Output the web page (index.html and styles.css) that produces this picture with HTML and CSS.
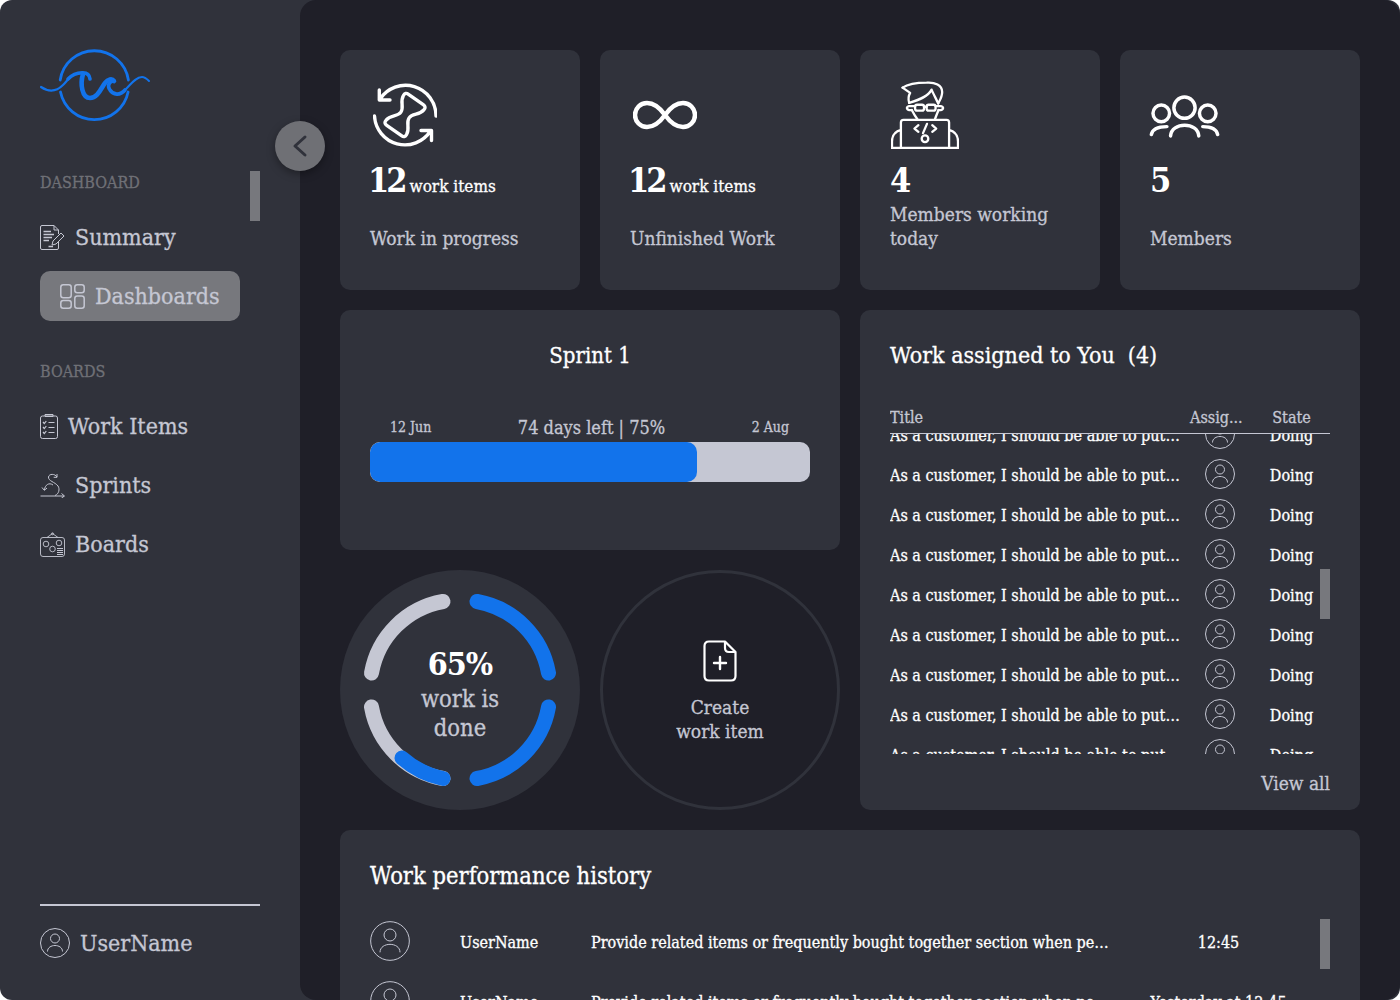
FILE: index.html
```html
<!DOCTYPE html>
<html lang="en">
<head>
  <meta charset="UTF-8" />
  <title>Dashboard</title>
  <link rel="stylesheet" href="styles.css">
</head>
<body>
<div class="app">

  <aside class="sidebar">
    <svg class="logo" viewBox="40 49 112 72" fill="none" stroke="#1273eb" stroke-linecap="round">
      <path d="M60.200 80A34.500 34.500 0 0 1 128.400 80" stroke-width="2.800"/>
      <path d="M60.500 92A34.500 34.500 0 0 0 128.100 92" stroke-width="2.800"/>
      <path d="M41 87C50 93 57 91 63 85C66 82 68 79 70 77.500" stroke-width="2.200"/>
      <path d="M68 79C72 75 77 73 82 72.800C87 72.500 89.500 75 90 79" stroke-width="3.600"/>
      <path d="M83 74C80 84 82 98 90 98C98 98 101 88 105 83C108 79 112 78 114 81" stroke-width="4.600"/>
      <path d="M113 81C109 82 107 86 110 90C113 95 120 96 125 90" stroke-width="3.600"/>
      <path d="M125 90C131 84 136 77 142 77C145 77 147 79 149 81" stroke-width="2"/>
    </svg>

    <div class="side-scroll"></div>
    <div class="nav-label first">DASHBOARD</div>
    <a class="nav-item">
      <svg class="nav-icon" viewBox="0 0 25 25" fill="none" stroke="#c5c7d3" stroke-width="1">
        <path d="M14 .5H2Q.5.5.5 2V23Q.5 24.500 2 24.500H17Q18.500 24.500 18.500 23V17M14 .5L18.500 5V9M14 .5V5H18.500"/>
        <path d="M3.500 6.500H11M3.500 9.500H14M3.500 12.500H12M3.500 15.500H9M8.500 21.500H13" stroke-width="1.300"/>
        <path d="M12 20L13 16L21 8L24 11L16 19Z"/>
      </svg>
      Summary
    </a>
    <a class="nav-item active">
      <svg class="nav-icon" viewBox="0 0 25 25" fill="none" stroke="#c5c7d3" stroke-width="1.500">
        <rect x=".8" y=".8" width="10.400" height="13" rx="2.500"/>
        <rect x="14.800" y=".8" width="9.400" height="8" rx="2.500"/>
        <rect x=".8" y="16.500" width="10.400" height="7.700" rx="2.500"/>
        <rect x="14.800" y="12" width="9.400" height="12.200" rx="2.500"/>
      </svg>
      Dashboards
    </a>

    <div class="nav-label">BOARDS</div>
    <a class="nav-item">
      <svg class="nav-icon clip" viewBox="0 0 18 25" fill="none" stroke="#c5c7d3" stroke-width="1">
        <rect x=".5" y="2" width="17" height="22.500" rx="2"/>
        <path d="M5 2V.5H13V2.500H5"/>
        <path d="M3 8L4.300 9.500L6.300 7M3 13L4.300 14.500L6.300 12M3 18L4.300 19.500L6.300 17" stroke-width="1.200"/>
        <path d="M8.500 8.500H14.500M8.500 13.500H14.500M8.500 18.500H14.500"/>
      </svg>
      Work Items
    </a>
    <a class="nav-item">
      <svg class="nav-icon" viewBox="0 0 25 25" fill="none" stroke="#c5c7d3" stroke-width="1">
        <path d="M.5 23H24M21.500 20.500L24.500 23L21.500 25"/>
        <path d="M17 4C15 .5 9 .5 8.500 4C8 8 15 9 18 13C20 16 19 21 15 22.500"/>
        <path d="M17 1V4.300H13.700"/>
        <path d="M13 12C9 9 5 12 4.300 17M2 14.500L4.300 17.300L7 15"/>
      </svg>
      Sprints
    </a>
    <a class="nav-item">
      <svg class="nav-icon" viewBox="0 0 25 25" fill="none" stroke="#c5c7d3" stroke-width=".9">
        <rect x=".5" y="5.500" width="24" height="19" rx="2.500"/>
        <path d="M7 5.500L12.500 1.500L18 5.500"/>
        <circle cx="12.500" cy="1.800" r="1"/>
        <circle cx="6" cy="12" r="2.800"/>
        <circle cx="19" cy="11" r="2.800"/>
        <circle cx="12.500" cy="17" r="2.800"/>
        <path d="M17 16.500H23M17 18.500H23M17 20.500H23M17 22.500H23" stroke-width="1.100"/>
      </svg>
      Boards
    </a>

    <div class="side-user">
      <svg class="avatar a30" viewBox="0 0 30 30" fill="none" stroke="#c5c7d3" stroke-width="1"><use href="#user"/></svg>
      UserName
    </div>

    <button class="collapse">
      <svg viewBox="0 0 50 50" fill="none" stroke="#30323b" stroke-width="3" stroke-linecap="round" stroke-linejoin="round"><path d="M30 16L20 25L30 34"/></svg>
    </button>
  </aside>

  <main class="main">
    <section class="stats">
      <div class="card stat">
        <svg class="stat-icon" viewBox="0 0 64 64" fill="none" stroke="#fff" stroke-width="3.400" stroke-linecap="round" stroke-linejoin="round">
          <path d="M6.300 7V17H17M7 16A30.500 30.500 0 0 1 63 33"/>
          <path d="M1.500 33A30.500 30.500 0 0 0 57.500 48M48 47.500H58.500V57.500"/>
          <path transform="translate(32 32) rotate(35)" d="M-9 -19H9Q13 -19 12.500 -15C12 -8 5 -6 5 0C5 6 12 8 12.500 15Q13 19 9 19H-9Q-13 19 -12.500 15C-12 8 -5 6 -5 0C-5 -6 -12 -8 -12.500 -15Q-13 -19 -9 -19Z"/>
        </svg>
        <div class="stat-num">12<small>work items</small></div>
        <div class="stat-label">Work in progress</div>
      </div>
      <div class="card stat">
        <svg class="stat-icon" viewBox="0 0 64 64" fill="none" stroke="#fff" stroke-width="4.500">
          <path d="M32 32C27 25 21 20 14 20A12 12 0 0 0 14 44C21 44 27 39 32 32C37 25 43 20 50 20A12 12 0 0 1 50 44C43 44 37 39 32 32Z"/>
        </svg>
        <div class="stat-num">12<small>work items</small></div>
        <div class="stat-label">Unfinished Work</div>
      </div>
      <div class="card stat">
        <svg class="stat-icon wide" viewBox="92 92 206 206" fill="none" stroke="#fff" stroke-width="7" stroke-linejoin="round" stroke-linecap="round">
          <path d="M127 112C145 100 170 97 200 97C225 95 247 105 247 125C247 140 240 150 235 160"/>
          <path d="M127 112L150 128C146 135 143 145 147 158"/>
          <path d="M147 158C175 150 205 140 215 118C220 130 228 145 235 160"/>
          <rect x="165" y="164" width="27" height="18" rx="6"/>
          <rect x="200" y="164" width="27" height="18" rx="6"/>
          <path d="M192 170H200M165 168H147C138 170 138 178 147 180H155M227 168H243C252 170 252 178 243 180H236"/>
          <path d="M155 180C160 190 166 200 172 208M236 180C232 190 228 200 225 208"/>
          <path d="M122 295V218Q122 210 130 210H260Q268 210 268 218V295M122 240C104 245 95 258 95 275V295H295V275C295 258 286 245 268 240"/>
          <path d="M175 226L163 236L175 246M217 226L229 236L217 246M201 222L189 250"/>
          <circle cx="195" cy="267" r="10"/>
        </svg>
        <div class="stat-num solo">4</div>
        <div class="stat-label two-line">Members working today</div>
      </div>
      <div class="card stat">
        <svg class="stat-icon members" viewBox="865 105 220 186" fill="none" stroke="#fff" stroke-width="10.500" stroke-linecap="round">
          <circle cx="905" cy="190" r="25"/>
          <circle cx="975" cy="173" r="32"/>
          <circle cx="1045" cy="190" r="25"/>
          <path d="M875 254C878 238 895 230 922 230M933 258C936 215 1015 215 1018 258M1030 230C1055 230 1072 238 1075 254"/>
        </svg>
        <div class="stat-num solo">5</div>
        <div class="stat-label">Members</div>
      </div>
    </section>

    <section class="middle">
      <div class="mid-left">
        <div class="card sprint">
          <h2 class="sprint-title">Sprint 1</h2>
          <div class="sprint-meta">
            <span>12 Jun</span>
            <strong>74 days left | 75%</strong>
            <span>2 Aug</span>
          </div>
          <div class="bar"><div class="bar-fill" style="width:74.3%"></div></div>
        </div>
        <div class="circles">
          <div class="donut">
            <svg viewBox="0 0 240 240" fill="none" stroke-width="15" stroke-linecap="round">
              <path stroke="#c5c7d3" d="M31.500 103A88.500 88.500 0 0 1 103 31.500"/>
              <path stroke="#c5c7d3" d="M31.500 137A88.500 88.500 0 0 0 103 208.500"/>
              <path stroke="#1273eb" d="M137 31.500A88.500 88.500 0 0 1 208.500 103"/>
              <path stroke="#1273eb" d="M208.500 137A88.500 88.500 0 0 1 137 208.500"/>
              <path stroke="#1273eb" d="M62 188A88.500 88.500 0 0 0 103 208.500"/>
            </svg>
            <div class="donut-text">
              <div class="donut-num">65%</div>
              <div class="donut-label">work is<br>done</div>
            </div>
          </div>
          <div class="create">
            <svg class="create-icon" viewBox="0 0 34 42" fill="none" stroke="#fff" stroke-width="2.200" stroke-linejoin="round" stroke-linecap="round">
              <path d="M22 1.500H6Q1.500 1.500 1.500 6V36Q1.500 40.500 6 40.500H28Q32.500 40.500 32.500 36V12ZM22 1.500V8Q22 12 26 12H32.500"/>
              <path d="M17 17V29M11 23H23" stroke-width="2.400"/>
            </svg>
            <div class="create-text">Create<br>work item</div>
          </div>
        </div>
      </div>

      <div class="card assigned">
        <h2 class="card-title">Work assigned to You&nbsp; (4)</h2>
        <div class="table-head">
          <span class="col-title">Title</span>
          <span class="col-user">Assig...</span>
          <span class="col-state">State</span>
        </div>
        <div class="rows">
          <div class="rows-inner" id="rows"></div>
          <div class="rows-scroll"></div>
        </div>
        <a class="view-all">View all</a>
      </div>
    </section>

    <section class="card history">
      <h2 class="card-title big">Work performance history</h2>
      <div class="history-scroll"></div>
      <div class="h-row">
        <svg class="avatar a40" viewBox="0 0 30 30" fill="none" stroke="#c5c7d3" stroke-width=".75"><use href="#user"/></svg>
        <span class="h-name">UserName</span>
        <span class="h-text">Provide related items or frequently bought together section when people browse</span>
        <span class="h-time">12:45</span>
      </div>
      <div class="h-row">
        <svg class="avatar a40" viewBox="0 0 30 30" fill="none" stroke="#c5c7d3" stroke-width=".75"><use href="#user"/></svg>
        <span class="h-name">UserName</span>
        <span class="h-text">Provide related items or frequently bought together section when people browse</span>
        <span class="h-time">Yesterday at 12:45</span>
      </div>
    </section>
  </main>
</div>

<svg class="defs" width="0" height="0">
  <defs>
    <g id="user">
      <circle cx="15" cy="15" r="14.500"/>
      <circle cx="15" cy="10.500" r="4.500"/>
      <path d="M7.500 23.500C7.500 15.500 22.500 15.500 22.500 23.500"/>
    </g>
  </defs>
</svg>

<script>
  const rows = document.getElementById('rows');
  for (let i = 0; i < 9; i++) {
    const row = document.createElement('div');
    row.className = 'row';
    row.innerHTML = '<span class="col-title">As a customer, I should be able to put items in my cart</span>' +
      '<span class="col-user"><svg class="avatar a30" viewBox="0 0 30 30" fill="none" stroke="#c5c7d3" stroke-width="1"><use href="#user"/></svg></span>' +
      '<span class="col-state">Doing</span>';
    rows.appendChild(row);
  }
</script>
</body>
</html>
```

FILE: styles.css
```css
* {
  box-sizing: border-box;
}

body {
  margin: 0;
  background: #fff;
  font-family: "DejaVu Serif Condensed", "DejaVu Serif", serif;
  font-stretch: condensed;
  -webkit-text-stroke: 0.3px;
  color: #fff;
}

.defs {
  position: absolute;
}

.app {
  display: flex;
  width: 1400px;
  height: 1000px;
  overflow: hidden;
  border-radius: 12px;
  background: #30323b;
}

/* sidebar */
.sidebar {
  position: relative;
  width: 300px;
  flex-shrink: 0;
  display: flex;
  flex-direction: column;
  padding: 49px 40px 0;
}

.logo {
  display: block;
  width: 112px;
  height: 72px;
}

.nav-label {
  margin-top: 41px;
  height: 20px;
  font-size: 16px;
  line-height: 20px;
  color: #6f7076;
}

.nav-label.first {
  margin-top: 0;
}

.side-scroll {
  align-self: flex-end;
  width: 10px;
  height: 50px;
  margin-top: 50px;
  margin-bottom: -48px;
  background: #77787d;
}

.nav-item {
  display: flex;
  align-items: center;
  gap: 10px;
  width: 200px;
  height: 50px;
  margin-top: 9px;
  font-size: 23px;
  color: #c5c7d3;
}

.nav-label + .nav-item {
  margin-top: 19px;
}

.nav-item.active {
  padding-left: 20px;
  background: #77787d;
  border-radius: 10px;
}

.nav-icon {
  width: 25px;
  height: 25px;
  flex-shrink: 0;
}

.nav-icon.clip {
  width: 18px;
}

.side-user {
  display: flex;
  align-items: center;
  gap: 10px;
  margin-top: auto;
  margin-bottom: 42px;
  padding-top: 22px;
  border-top: 2px solid #c5c7d3;
  font-size: 23px;
  color: #c5c7d3;
}

.avatar {
  display: block;
  flex-shrink: 0;
}

.a30 {
  width: 30px;
  height: 30px;
}

.a40 {
  width: 40px;
  height: 40px;
}

.collapse {
  position: absolute;
  left: 275px;
  top: 121px;
  z-index: 2;
  width: 50px;
  height: 50px;
  padding: 0;
  border: none;
  border-radius: 50%;
  background: #6f7075;
  box-shadow: 0 3px 8px rgba(0, 0, 0, 0.35);
}

.collapse svg {
  display: block;
}

/* main */
.main {
  flex: 1;
  min-width: 0;
  padding: 50px 40px 0;
  background: #1f1f28;
  border-radius: 16px;
}

.card {
  background: #30323b;
  border-radius: 10px;
}

.stats {
  display: grid;
  grid-template-columns: repeat(4, 240px);
  gap: 20px;
}

.stat {
  height: 240px;
  padding: 30px;
}

.stat-icon {
  display: block;
  width: 64px;
  height: 64px;
  margin: 3px 0 0 3px;
}

.stat-icon.wide {
  width: 68px;
  height: 68px;
  margin: 1px 0 -2px 1px;
}

.stat-icon.members {
  width: 73px;
  height: 62px;
  margin: 5px 0 0 -2px;
}

.stat-num {
  display: flex;
  align-items: baseline;
  gap: 5px;
  height: 38px;
  margin: 14px 0 0 -2px;
  font-size: 34px;
  line-height: 38px;
  font-weight: 700;
  letter-spacing: -3px;
  -webkit-text-stroke: 0;
}

.stat-num.solo {
  margin-left: 0;
}

.stat-num small {
  font-size: 17px;
  font-weight: 400;
  letter-spacing: 0;
  -webkit-text-stroke: 0.3px;
}

.stat-label {
  margin-top: 27px;
  font-size: 19px;
  line-height: 24px;
  color: #c5c7d3;
}

.stat-label.two-line {
  margin-top: 3px;
}

.middle {
  display: grid;
  grid-template-columns: 500px 500px;
  gap: 20px;
  margin-top: 20px;
}

.mid-left {
  display: flex;
  flex-direction: column;
  gap: 20px;
}

.sprint {
  height: 240px;
  padding: 30px;
}

.sprint-title {
  margin: 0;
  font-size: 22px;
  line-height: 32px;
  font-weight: 400;
  text-align: center;
}

.sprint-meta {
  display: flex;
  justify-content: space-between;
  align-items: center;
  margin-top: 43px;
  padding: 0 21px 0 20px;
  height: 24px;
  font-size: 14px;
  color: #c5c7d3;
}

.sprint-meta strong {
  font-size: 18px;
  font-weight: 400;
}

.bar {
  height: 40px;
  margin-top: 3px;
  background: #c5c7d3;
  border-radius: 10px;
  overflow: hidden;
}

.bar-fill {
  height: 100%;
  background: #1273eb;
  border-radius: 10px;
}

.circles {
  display: flex;
  gap: 20px;
}

.donut {
  display: grid;
  place-items: center;
  width: 240px;
  height: 240px;
  background: #30323b;
  border-radius: 50%;
}

.donut svg,
.donut-text {
  grid-area: 1 / 1;
}

.donut svg {
  width: 240px;
  height: 240px;
}

.donut-text {
  padding-top: 5px;
  text-align: center;
}

.donut-num {
  font-size: 32px;
  line-height: 42px;
  font-weight: 700;
  letter-spacing: -1px;
  -webkit-text-stroke: 0;
}

.donut-label {
  font-size: 23.500px;
  line-height: 29px;
  color: #c5c7d3;
}

.create {
  display: flex;
  flex-direction: column;
  align-items: center;
  justify-content: center;
  width: 240px;
  height: 240px;
  padding-top: 2px;
  border: 3px solid #30323b;
  border-radius: 50%;
}

.create-icon {
  width: 34px;
  height: 42px;
}

.create-text {
  margin-top: 13px;
  font-size: 19px;
  line-height: 24px;
  text-align: center;
  color: #c5c7d3;
}

.assigned {
  height: 500px;
  padding: 30px;
}

.card-title {
  margin: 0;
  font-size: 23px;
  line-height: 30px;
  font-weight: 400;
}

.card-title.big {
  font-size: 23.500px;
  line-height: 32px;
}

.table-head,
.row {
  display: grid;
  grid-template-columns: 292px 68px 80px;
  align-items: center;
  font-size: 16px;
}

.table-head {
  height: 32px;
  margin-top: 32px;
  border-bottom: 1px solid #c5c7d3;
  color: #c5c7d3;
  line-height: 20px;
}

.table-head .col-user {
  padding-left: 8px;
}

.table-head .col-state {
  padding-left: 3px;
  text-align: center;
}

.col-title {
  white-space: nowrap;
  overflow: hidden;
  text-overflow: ellipsis;
}

.rows {
  position: relative;
  height: 320px;
  overflow: hidden;
}

.rows-inner {
  margin-top: -20px;
}

.row {
  height: 40px;
}

.row .col-title {
  padding-top: 2px;
}

.row .col-user {
  padding-left: 23px;
}

.row .col-state {
  padding: 2px 0 0 3px;
  text-align: center;
}

.rows-scroll {
  position: absolute;
  right: 0;
  top: 135px;
  width: 10px;
  height: 50px;
  background: #77787d;
}

.view-all {
  display: block;
  margin-top: 17px;
  font-size: 19px;
  line-height: 24px;
  text-align: right;
  color: #c5c7d3;
}

.history {
  position: relative;
  height: 260px;
  margin-top: 20px;
  padding: 30px;
}

.history-scroll {
  position: absolute;
  right: 30px;
  top: 89px;
  width: 10px;
  height: 50px;
  background: #77787d;
}

.h-row {
  display: grid;
  grid-template-columns: 90px 131px 559px 137px;
  align-items: center;
  height: 60px;
  font-size: 16px;
}

.card-title + .history-scroll + .h-row {
  margin-top: 19px;
}

.h-name,
.h-time {
  padding-top: 2px;
}

.h-text {
  white-space: nowrap;
  overflow: hidden;
  text-overflow: ellipsis;
  padding: 2px 38px 0 0;
}

.h-time {
  white-space: nowrap;
  text-align: center;
}
```
